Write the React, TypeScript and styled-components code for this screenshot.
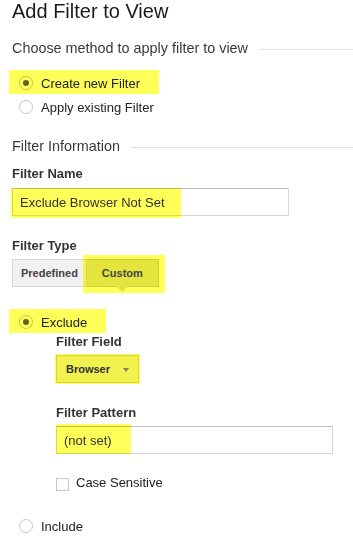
import styled, { createGlobalStyle, css } from 'styled-components';

const GlobalStyle = createGlobalStyle`
  html, body {
    margin: 0;
    padding: 0;
    background: #fff;
  }
  body {
    font-family: "Liberation Sans", Arial, sans-serif;
    color: #222;
  }
`;

// translucent marker pen, multiplied over whatever sits below it
const highlight = css`
  background-color: rgba(255, 255, 0, 0.65);
  mix-blend-mode: multiply;
`;

const Page = styled.div`
  width: 353px;
  box-sizing: border-box;
  padding-left: 12px;
  overflow: hidden;
`;

const Title = styled.h1`
  margin: 0;
  font-size: 20px;
  line-height: 22px;
  font-weight: normal;
  color: #1a1a1a;
`;

const SectionHeader = styled.div<{ $top: number }>`
  display: flex;
  align-items: center;
  gap: 11px;
  margin-top: ${(p) => p.$top}px;
  font-size: 14.4px;
  line-height: 18px;
  color: #3a3a3a;

  &::after {
    content: '';
    flex: 1;
    height: 1px;
    margin-top: 3px;
    background: #e2e2e2;
  }
`;

const RadioRow = styled.label<{ $top?: number; $marked?: boolean }>`
  display: flex;
  align-items: center;
  gap: 8px;
  width: max-content;
  height: 24px;
  box-sizing: border-box;
  margin: ${(p) => p.$top ?? 0}px 0 0 -3px;
  padding: 2px 19px 0 10px;
  font-size: 13px;
  color: #222;
  ${(p) => p.$marked && highlight}
`;

const RadioCircle = styled.span<{ $checked?: boolean }>`
  display: flex;
  align-items: center;
  justify-content: center;
  width: 14px;
  height: 14px;
  box-sizing: border-box;
  border-radius: 50%;
  border: 1px solid rgba(0, 0, 0, 0.22);

  &::after {
    content: '';
    display: ${(p) => (p.$checked ? 'block' : 'none')};
    width: 6px;
    height: 6px;
    border-radius: 50%;
    background: rgba(0, 0, 0, 0.62);
  }
`;

const FieldLabel = styled.div<{ $top: number }>`
  margin-top: ${(p) => p.$top}px;
  font-size: 13px;
  line-height: 16px;
  font-weight: bold;
  color: #333;
`;

const TextBox = styled.div<{ $top: number }>`
  display: flex;
  width: 277px;
  height: 28px;
  box-sizing: border-box;
  margin-top: ${(p) => p.$top}px;
  border: 1px solid #d8d8d8;
  border-top-color: #bfbfbf;
  background: #fff;
  font-size: 13px;
  color: #333;
`;

interface TextMarkProps {
  $width: number;
  $up: number;
  $down: number;
  $left: number;
  $pad: number;
}

const TextMark = styled.span<TextMarkProps>`
  ${highlight};
  display: flex;
  align-items: center;
  width: ${(p) => p.$width}px;
  box-sizing: border-box;
  margin: -${(p) => p.$up}px 0 -${(p) => p.$down}px -${(p) => p.$left}px;
  padding: ${(p) => p.$up}px 0 ${(p) => p.$down}px ${(p) => p.$pad}px;
`;

const Segmented = styled.div`
  display: flex;
  margin-top: 5px;
`;

const SegButton = styled.div<{ $active?: boolean }>`
  position: relative;
  display: flex;
  align-items: center;
  height: 28px;
  box-sizing: border-box;
  padding: 0 ${(p) => (p.$active ? 15 : 8)}px;
  border: 1px solid ${(p) => (p.$active ? '#cdcd38' : '#d9d9d9')};
  ${(p) => p.$active && 'border-left: 0;'}
  background: ${(p) => (p.$active ? '#e4e43e' : '#f1f1f1')};
  font-size: 11px;
  font-weight: bold;
  color: #444;

  ${(p) =>
    p.$active &&
    css`
      &::after {
        content: '';
        position: absolute;
        top: 100%;
        left: 50%;
        margin-left: -6px;
        border-left: 6px solid transparent;
        border-right: 6px solid transparent;
        border-top: 6px solid #e4e43e;
      }
    `}
`;

const ButtonMark = styled.div`
  ${highlight};
  display: flex;
  margin: -4px -6px -6px -4px;
  padding: 4px 6px 6px 4px;
`;

const Indented = styled.div`
  margin: 1px 0 0 44px;
`;

const SelectMark = styled.div`
  ${highlight};
  display: inline-flex;
  margin: 4px 0 0 -1px;
  padding: 1px;
`;

const Select = styled.div`
  display: flex;
  align-items: center;
  gap: 13px;
  height: 28px;
  box-sizing: border-box;
  padding: 0 9px;
  border: 1px solid #d6d63e;
  background: #f2f24f;
  font-size: 11px;
  font-weight: bold;
  color: #333;
`;

const Caret = styled.span`
  width: 0;
  height: 0;
  margin-top: 1px;
  border-left: 3.5px solid transparent;
  border-right: 3.5px solid transparent;
  border-top: 4px solid #808060;
`;

const CheckRow = styled.label`
  display: flex;
  align-items: flex-start;
  gap: 7px;
  margin-top: 21px;
  font-size: 13px;
  line-height: 16px;
  color: #222;
`;

const CheckBox = styled.span`
  width: 13px;
  height: 13px;
  box-sizing: border-box;
  margin-top: 3px;
  border: 1px solid #c6c6c6;
  background: #fff;
`;

export default function App() {
  return (
    <Page>
      <GlobalStyle />
      <Title>Add Filter to View</Title>

      <SectionHeader $top={17}>Choose method to apply filter to view</SectionHeader>
      <RadioRow $top={13} $marked>
        <RadioCircle $checked />
        <span>Create new Filter</span>
      </RadioRow>
      <RadioRow>
        <RadioCircle />
        <span>Apply existing Filter</span>
      </RadioRow>

      <SectionHeader $top={19}>Filter Information</SectionHeader>
      <FieldLabel $top={11}>Filter Name</FieldLabel>
      <TextBox $top={6}>
        <TextMark $width={170} $up={1} $down={3} $left={2} $pad={9}>
          Exclude Browser Not Set
        </TextMark>
      </TextBox>

      <FieldLabel $top={22}>Filter Type</FieldLabel>
      <Segmented>
        <SegButton>Predefined</SegButton>
        <ButtonMark>
          <SegButton $active>Custom</SegButton>
        </ButtonMark>
      </Segmented>

      <RadioRow $top={22} $marked>
        <RadioCircle $checked />
        <span>Exclude</span>
      </RadioRow>
      <Indented>
        <FieldLabel $top={0}>Filter Field</FieldLabel>
        <SelectMark>
          <Select>
            <span>Browser</span>
            <Caret />
          </Select>
        </SelectMark>

        <FieldLabel $top={21}>Filter Pattern</FieldLabel>
        <TextBox $top={5}>
          <TextMark $width={75} $up={3} $down={1} $left={1} $pad={8}>
            (not set)
          </TextMark>
        </TextBox>

        <CheckRow>
          <CheckBox />
          <span>Case Sensitive</span>
        </CheckRow>
      </Indented>

      <RadioRow $top={22}>
        <RadioCircle />
        <span>Include</span>
      </RadioRow>
    </Page>
  );
}
